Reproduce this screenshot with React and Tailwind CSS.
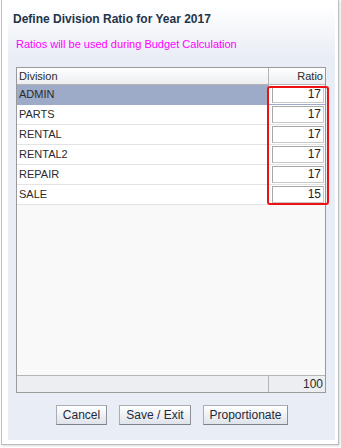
import React from "react";

const rows = [
  { name: "ADMIN", v: "17", sel: true },
  { name: "PARTS", v: "17" },
  { name: "RENTAL", v: "17" },
  { name: "RENTAL2", v: "17" },
  { name: "REPAIR", v: "17" },
  { name: "SALE", v: "15" },
];

function Btn({ children, w }) {
  return (
    <button
      className={`h-[20px] ${w} border border-[#a9adb5] border-b-[#7d828a] border-r-[#8d9199] bg-gradient-to-b from-[#ffffff] to-[#dfe3ea] text-[12px] text-[#1e2a3a] leading-none`}
    >
      {children}
    </button>
  );
}

export default function App() {
  return (
    <div
      className="w-[341px] h-[448px] bg-white"
      style={{ fontFamily: '"Liberation Sans", Arial, sans-serif' }}
    >
      <div className="ml-[1px] w-[338px] h-[445px] border-l border-r border-b border-[#bdbdbd] pt-[5px] pl-[6px] pr-[4px] shadow-[1px_1px_2px_rgba(0,0,0,0.15)]">
        <div className="h-[435px] w-[327px] bg-gradient-to-b from-[#ffffff] to-[#e9edf5] to-[12%] flex flex-col">
          <div className="pl-[5px] pt-[7px] text-[12px] font-bold text-[#1f3448] leading-[14px] h-[22px]">
            Define Division Ratio for Year 2017
          </div>
          <div className="pl-[8px] pt-[11px] text-[11px] text-[#ff00ff] leading-[13px] h-[40px]">
            Ratios will be used during Budget Calculation
          </div>
          <div className="ml-[8px] w-[310px] h-[326px] border border-[#9a9a9a] bg-[#f9f9f9] flex flex-col text-[11px] text-[#2b2b2b]">
            <div className="flex h-[17px] border-b border-[#b5b5b5] bg-gradient-to-b from-[#ffffff] to-[#eceef1]">
              <div className="flex-1 pl-[2px] leading-[16px] border-r border-[#b5b5b5]">Division</div>
              <div className="w-[56px] text-right pr-[2px] leading-[16px]">Ratio</div>
            </div>
            <div className="relative flex flex-col bg-white">
              {rows.map((r) => (
                <div
                  key={r.name}
                  className={`flex h-[20px] border-b ${r.sel ? "bg-[#9dabc9] border-[#9dabc9]" : "border-[#e3e3e3]"}`}
                >
                  <div className="flex-1 pl-[2px] leading-[19px]">{r.name}</div>
                  <div className="w-[56px] bg-white flex items-center pl-[3px] pr-[1px]">
                    <div className="w-[52px] h-[17px] border border-[#c8c8c8] border-t-[#a8a8a8] border-l-[#a8a8a8] bg-white text-right pr-[2px] leading-[15px] text-[12px] text-[#222]">
                      {r.v}
                    </div>
                  </div>
                </div>
              ))}
              <div className="absolute left-[250px] top-[1px] w-[62px] h-[119px] border-2 border-[#ee1111] rounded-[3px]" />
            </div>
            <div className="flex-1" />
            <div className="flex h-[17px] border-t border-[#b5b5b5] bg-[#eceef2]">
              <div className="flex-1 border-r border-[#b5b5b5]" />
              <div className="w-[56px] text-right pr-[2px] leading-[16px] text-[12px]">100</div>
            </div>
          </div>
          <div className="flex gap-[12px] mt-[12px] pl-[48px]">
            <Btn w="w-[51px]">Cancel</Btn>
            <Btn w="w-[72px]">Save / Exit</Btn>
            <Btn w="w-[85px]">Proportionate</Btn>
          </div>
        </div>
      </div>
    </div>
  );
}
